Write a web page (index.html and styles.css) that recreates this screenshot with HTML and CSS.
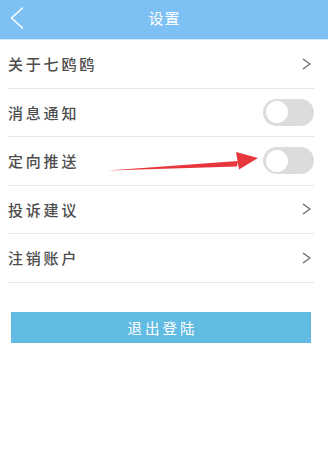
FILE: index.html
```html
<!DOCTYPE html>
<html lang="zh">
<head>
<meta charset="utf-8">
<link rel="stylesheet" href="styles.css">
</head>
<body>
<div class="page">
  <header class="topbar">
    <span class="back">
      <svg width="14" height="22" viewBox="0 0 14 22"><polyline points="12.5,1 1.5,11 12.5,21" fill="none" stroke="#fff" stroke-width="1.6" stroke-linecap="round" stroke-linejoin="round"/></svg>
    </span>
    <h1 class="title">设置</h1>
  </header>
  <ul class="list">
    <li class="row"><span class="label">关于七鸥鸥</span><span class="chev"><svg width="9" height="12" viewBox="0 0 9 12"><polyline points="1,1 8,6 1,11" fill="none" stroke="#6a6a6a" stroke-width="1.3"/></svg></span></li>
    <li class="row"><span class="label">消息通知</span><span class="toggle"><span class="knob"></span></span></li>
    <li class="row"><span class="label">定向推送</span><span class="toggle"><span class="knob"></span></span></li>
    <li class="row"><span class="label">投诉建议</span><span class="chev"><svg width="9" height="12" viewBox="0 0 9 12"><polyline points="1,1 8,6 1,11" fill="none" stroke="#6a6a6a" stroke-width="1.3"/></svg></span></li>
    <li class="row"><span class="label">注销账户</span><span class="chev"><svg width="9" height="12" viewBox="0 0 9 12"><polyline points="1,1 8,6 1,11" fill="none" stroke="#6a6a6a" stroke-width="1.3"/></svg></span></li>
  </ul>
  <button class="logout">退出登陆</button>
  <svg class="arrow" width="160" height="24" viewBox="0 0 160 24">
    <polygon points="0,19.5 130,10 129,15.5" fill="#e8363d"/>
    <polygon points="128,1 150,7 131,18.5" fill="#e8363d"/>
  </svg>
</div>
</body>
</html>
```

FILE: styles.css
```css
html, body {
  margin: 0;
  padding: 0;
  background: #fff;
}
body {
  font-family: "Noto Sans CJK SC", "Noto Sans", sans-serif;
}
.page {
  position: relative;
  width: 328px;
  min-height: 467px;
}
.topbar {
  height: 39px;
  background: #7dc0f3;
  display: flex;
  align-items: center;
  position: relative;
  border-bottom: 1px solid #d7ebf9;
}
.back {
  display: flex;
  margin-left: 10px;
  margin-top: -4px;
}
.title {
  position: absolute;
  left: 0;
  right: 0;
  top: 0;
  margin: 0;
  text-align: center;
  line-height: 35px;
  font-size: 15px;
  font-weight: normal;
  color: #fff;
  letter-spacing: 1px;
  padding-left: 1px;
}
.list {
  list-style: none;
  margin: 0 14px 0 8px;
  padding: 0;
}
.row {
  box-sizing: border-box;
  height: 48.5px;
  border-bottom: 1px solid #e6e6e6;
  display: flex;
  align-items: center;
  justify-content: space-between;
}
.label {
  font-size: 15px;
  letter-spacing: 2.8px;
  color: #4d4d4d;
  font-weight: 500;
}
.chev {
  display: flex;
  margin-right: 3px;
}
.toggle {
  box-sizing: border-box;
  width: 51px;
  height: 27px;
  border-radius: 14px;
  background: #dcdcdc;
  padding: 2.5px;
  display: flex;
}
.knob {
  width: 22px;
  height: 22px;
  border-radius: 50%;
  background: #fff;
}
.logout {
  display: block;
  margin: 29px 0 0 11px;
  width: 300px;
  height: 31px;
  border: none;
  background: #62bbe2;
  color: #fff;
  font-family: "Noto Sans CJK SC", "Noto Sans", sans-serif;
  font-size: 14.5px;
  letter-spacing: 3px;
  padding: 0 0 0 3px;
}
.arrow {
  position: absolute;
  left: 108px;
  top: 151px;
}
```
